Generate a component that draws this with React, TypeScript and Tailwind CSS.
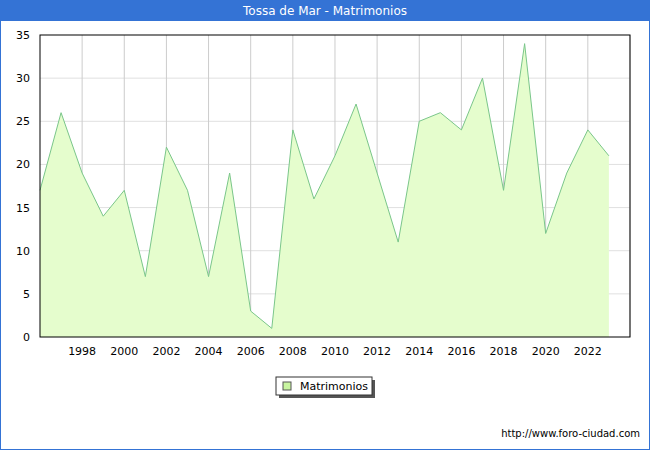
const data = [17, 26, 19, 14, 17, 7, 22, 17, 7, 19, 3, 1, 24, 16, 21, 27, 19, 11, 25, 26, 24, 30, 17, 34, 12, 19, 24, 21];
const X0 = 40, X1 = 630, Y0 = 35, Y1 = 337;
const dx = 21.07;
const yOf = (v: number) => Y1 - (v / 35) * (Y1 - Y0);

export default function App() {
  const pts = data.map((v, i) => `${X0 + i * dx},${yOf(v)}`).join(" ");
  const area = `${X0},${Y1} ${pts} ${X0 + (data.length - 1) * dx},${Y1}`;
  return (
    <div className="w-[650px] h-[450px] bg-white border border-[#3473d5] flex flex-col" style={{ fontFamily: '"DejaVu Sans", sans-serif' }}>
      <div className="h-[20px] bg-[#3473d5] text-white text-[12px] flex items-center justify-center">Tossa de Mar - Matrimonios</div>
      <div className="relative flex-1">
        <svg width="648" height="428" className="absolute left-0 top-0" viewBox="1 21 648 428">
          <polygon points="0,0" fill="none" />
          {[5, 10, 15, 20, 25, 30].map((v) => (
            <line key={v} x1={X0} x2={X1} y1={yOf(v)} y2={yOf(v)} stroke="#e0e0e0" />
          ))}
          {Array.from({ length: 14 }, (_, k) => X0 + (k + 1) * 2 * dx).map((x) => (
            <line key={x} x1={x} x2={x} y1={Y0} y2={Y1} stroke="#cccccc" />
          ))}
          <polygon points={area} fill="#e5fdcd" />
          <polyline points={pts} fill="none" stroke="#7ac68a" strokeWidth="1" />
          <rect x={X0} y={Y0} width={X1 - X0} height={Y1 - Y0} fill="none" stroke="#000" />
          {[0, 5, 10, 15, 20, 25, 30, 35].map((v) => (
            <text key={v} x="30" y={yOf(v) + 4} textAnchor="end" fontSize="11" fill="#000" fontFamily="DejaVu Sans">{v}</text>
          ))}
          {Array.from({ length: 13 }, (_, k) => 1998 + k * 2).map((yr) => (
            <text key={yr} x={X0 + (yr - 1996) * dx} y="355" textAnchor="middle" fontSize="11" fill="#000" fontFamily="DejaVu Sans">{yr}</text>
          ))}
          <rect x="279" y="380" width="96" height="18" fill="#555" />
          <rect x="276" y="377" width="96" height="18" fill="#fff" stroke="#333" />
          <rect x="283" y="382" width="8" height="8" fill="#c8f5a0" stroke="#555" />
          <text x="300" y="390" fontSize="11" fill="#000" fontFamily="DejaVu Sans">Matrimonios</text>
          <text x="640" y="437" textAnchor="end" fontSize="10" fill="#000" fontFamily="DejaVu Sans">http://www.foro-ciudad.com</text>
        </svg>
      </div>
    </div>
  );
}
